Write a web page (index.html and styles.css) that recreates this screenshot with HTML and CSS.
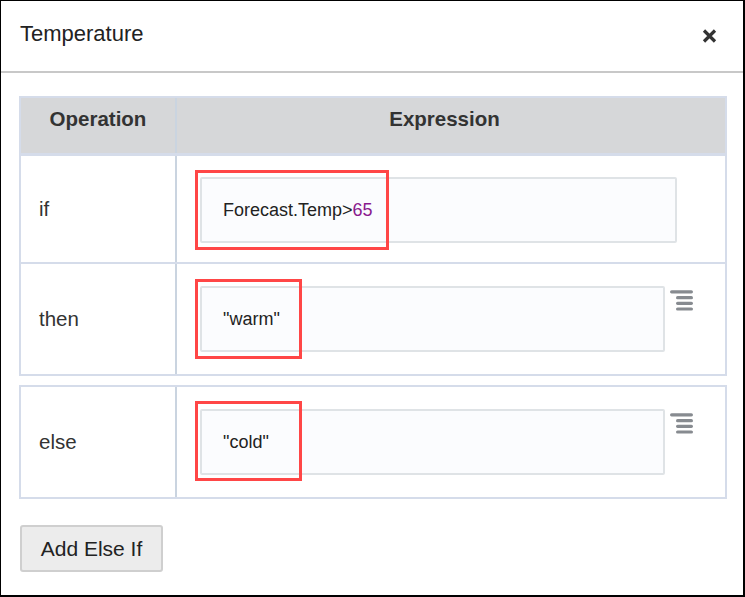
FILE: index.html
```html
<!DOCTYPE html>
<html>
<head>
<meta charset="utf-8">
<link rel="stylesheet" href="styles.css">
</head>
<body>
<div class="dialog">
  <div class="head">
    <span class="title">Temperature</span>
    <span class="close">
      <svg width="15" height="14" viewBox="0 0 15 14"><path d="M2 1.5 L13 12.5 M13 1.5 L2 12.5" stroke="#333" stroke-width="3.2" stroke-linecap="butt"/></svg>
    </span>
  </div>
  <div class="body">
    <div class="tbl">
      <div class="row hrow">
        <div class="c1 th">Operation</div>
        <div class="c2 th th2">Expression</div>
      </div>
      <div class="row r1">
        <div class="c1 op">if</div>
        <div class="c2 ex">
          <div class="field wide">Forecast.Temp&gt;<span class="num">65</span><span class="mark m1"></span></div>
        </div>
      </div>
      <div class="row r2">
        <div class="c1 op">then</div>
        <div class="c2 ex">
          <div class="field">"warm"<span class="mark m2"></span></div>
          <span class="menu"><svg width="23" height="21" viewBox="0 0 23 21"><g stroke="#878b90" stroke-width="3.2" stroke-linecap="round"><path d="M1.6 1.8 H21.4"/><path d="M7.6 7.7 H21.4"/><path d="M7.6 13.3 H21.4"/><path d="M7.6 19 H21.4"/></g></svg></span>
        </div>
      </div>
    </div>
    <div class="tbl etbl">
      <div class="row r2">
        <div class="c1 op">else</div>
        <div class="c2 ex">
          <div class="field">"cold"<span class="mark m3"></span></div>
          <span class="menu m-else"><svg width="23" height="21" viewBox="0 0 23 21"><g stroke="#878b90" stroke-width="3.2" stroke-linecap="round"><path d="M1.6 1.8 H21.4"/><path d="M7.6 7.7 H21.4"/><path d="M7.6 13.3 H21.4"/><path d="M7.6 19 H21.4"/></g></svg></span>
        </div>
      </div>
    </div>
    <button class="add">Add Else If</button>
  </div>
</div>
</body>
</html>
```
FILE: styles.css
```css
* { box-sizing: border-box; }
html, body { margin: 0; padding: 0; background: #fff; }
body { font-family: "Liberation Sans", Arial, sans-serif; color: #333; }

.dialog {
  width: 745px;
  height: 597px;
  border: 1px solid #000;
  border-right-width: 2px;
  border-bottom-width: 2px;
  background: #fff;
}

.head {
  height: 72px;
  border-bottom: 2px solid #c8c8c8;
  display: flex;
  align-items: center;
  justify-content: space-between;
  padding: 0 26px 4px 19px;
}
.title { font-size: 22px; line-height: 26px; color: #222; }
.close { display: flex; margin-top: 3px; }

.body { padding: 23px 16px 0 18px; }

.tbl {
  border: 2px solid #d5dcea;
}
.etbl { margin-top: 9px; }

.row { display: flex; }
.c1 {
  width: 156px;
  border-right: 2px solid #cad4e0;
  flex: none;
}
.c2 { flex: 1; }

.hrow { background: #d6d7d9; border-bottom: 3px solid #d5dcea; }
.th {
  height: 55px;
  padding-top: 9px;
  line-height: 23px;
  font-size: 20.5px;
  font-weight: bold;
  text-align: center;
  color: #333;
}
.th2 { padding-right: 13px; }

.r1 { height: 108px; border-bottom: 2px solid #d5dcea; }
.r2 { height: 110px; }

.op {
  display: flex;
  align-items: center;
  padding-left: 18px;
  font-size: 20.5px;
  color: #333;
}
.ex {
  display: flex;
  align-items: center;
  padding-left: 23px;
}
.r1 .ex { padding-top: 1px; }

.field {
  position: relative;
  width: 465px;
  height: 66px;
  border: 2px solid #dfe3e6;
  border-radius: 2px;
  background: #fbfcfe;
  padding-left: 21px;
  font-size: 18px;
  line-height: 62px;
  color: #222;
}
.field.wide { width: 477px; }
.num { color: #8a1a8e; }

.mark {
  position: absolute;
  left: -7px;
  top: -9px;
  height: 80px;
  border: 3px solid #ff4646;
}
.m1 { width: 194px; }
.m2 { width: 107px; }
.m3 { width: 107px; top: -10px; }

.menu {
  display: flex;
  align-self: flex-start;
  margin-top: 26px;
  margin-left: 5px;
}
.m-else { margin-top: 26px; }

.add {
  margin-top: 26px;
  width: 143px;
  height: 47px;
  border: 2px solid #cfcfcf;
  border-radius: 3px;
  background: #ececec;
  font-family: "Liberation Sans", Arial, sans-serif;
  font-size: 21px;
  color: #222;
  padding: 0;
  margin-left: 1px;
}
```
